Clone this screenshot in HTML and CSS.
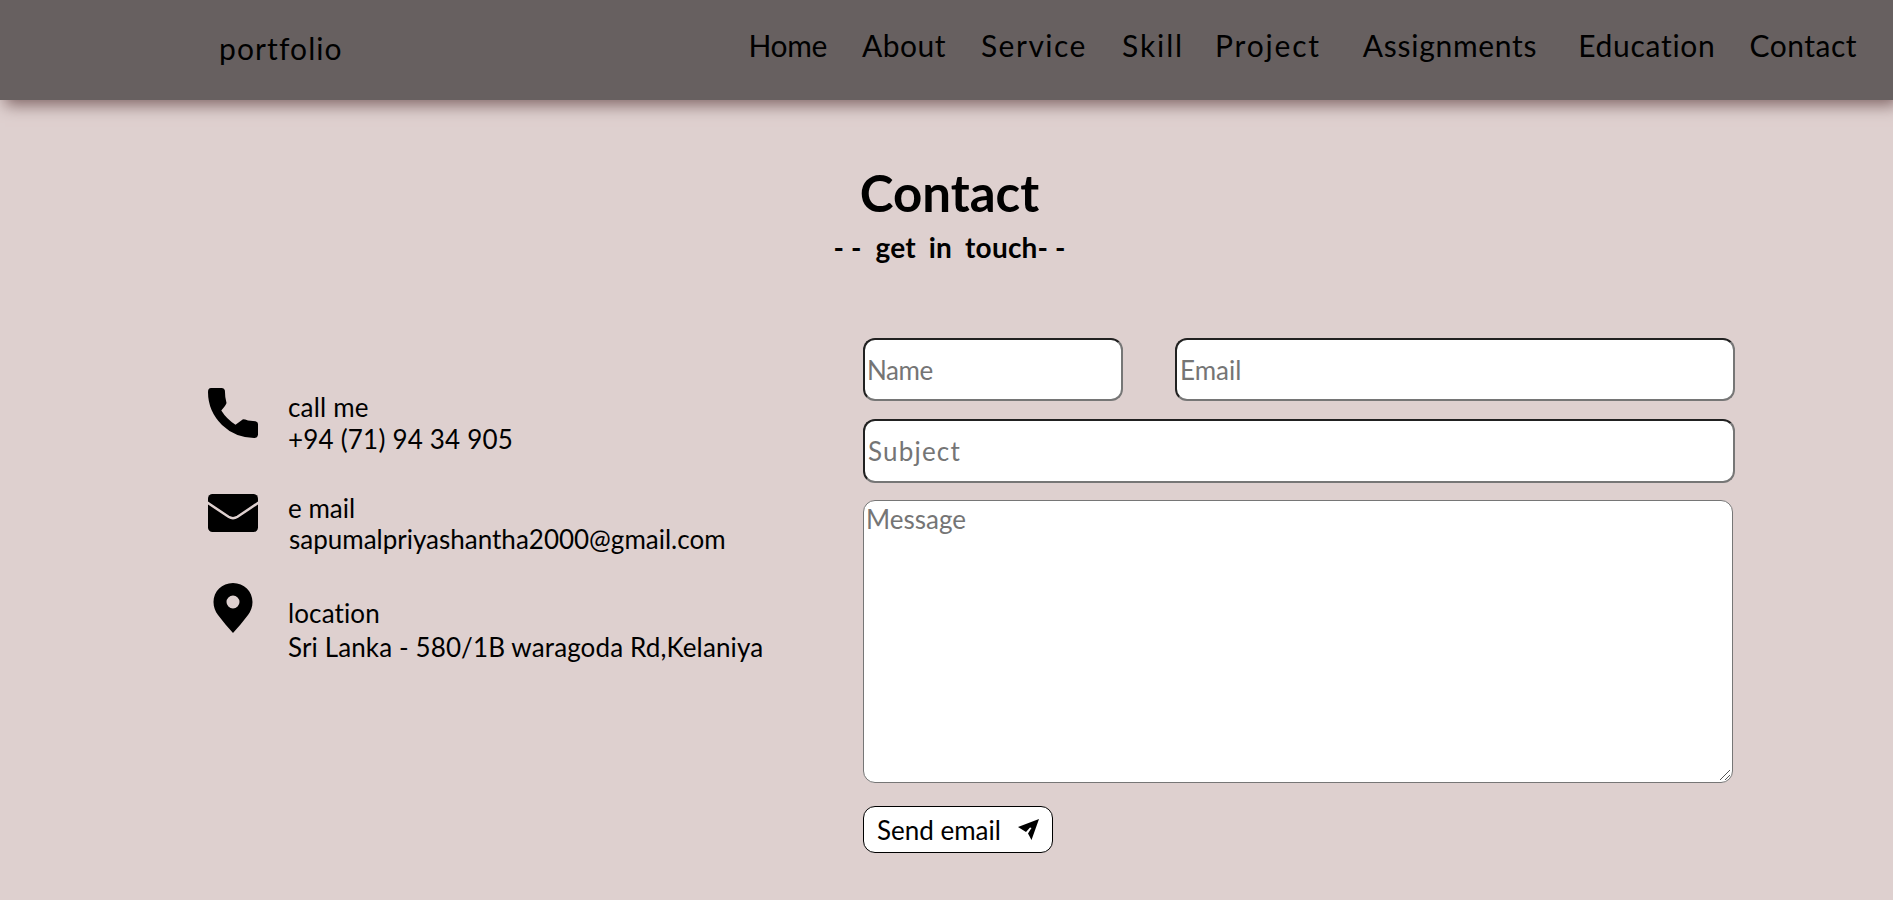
FILE: index.html
```html
<!DOCTYPE html>
<html lang="en">
<head>
<meta charset="utf-8">
<title>portfolio</title>
<link rel="stylesheet" href="styles.css">
</head>
<body>
<header class="navbar">
  <a class="logo">portfolio</a>
  <nav class="menu">
    <a class="home">Home</a><a class="about">About</a><a class="service">Service</a><a class="skill">Skill</a><a class="project">Project</a><a class="assignments">Assignments</a><a class="education">Education</a><a class="contact">Contact</a>
  </nav>
</header>
<main>
  <h1 class="title">Contact</h1>
  <h2 class="subtitle"><span class="dash">--</span> <span class="words">get in touch</span><span class="dash">--</span></h2>
  <div class="columns">
    <section class="info">
      <div class="row phone">
        <svg class="icon" viewBox="0 0 50 50"><path d="M3 0H14Q16.500 0 16.900 2.500L17.300 9 18.500 15Q18 17 13.300 22.500 18.500 31 27.500 36.700L35 31.300Q37 31.300 40 32.500L47.500 33.300Q50 33.800 50 36V46.500Q49.700 50 46 50 27 49.500 14 37 0 23 0 4 0 0 3 0Z"/></svg>
        <div class="lines"><div>call me</div><div>+94 (71) 94 34 905</div></div>
      </div>
      <div class="row mail">
        <svg class="icon" viewBox="0 0 50 50"><rect y="6" width="50" height="38" rx="4.500"/><path class="fold" d="M-1 14.300 20.500 28.800Q25 31.500 29.500 28.800L51 14.300"/></svg>
        <div class="lines"><div>e mail</div><div class="address">sapumalpriyashantha2000@gmail.com</div></div>
      </div>
      <div class="row location">
        <svg class="icon" viewBox="0 0 50 50"><path fill-rule="evenodd" d="M25 0C14 0 5.500 8.500 5.500 19c0 5 1.800 9.500 4.500 13 5 6.500 10 12.500 15 18 5-5.500 10-11.500 15-18 2.700-3.500 4.500-8 4.500-13C44.500 8.500 36 0 25 0ZM25 12.500a6.500 6.500 0 1 1 0 13 6.500 6.500 0 0 1 0-13Z"/></svg>
        <div class="lines"><div>location</div><div>Sri Lanka - 580/1B waragoda Rd,Kelaniya</div></div>
      </div>
    </section>
    <form class="form">
      <div class="pair">
        <input class="name" type="text" placeholder="Name">
        <input class="email" type="text" placeholder="Email">
      </div>
      <input class="subject" type="text" placeholder="Subject">
      <div class="message-box">
        <textarea class="message" placeholder="Message"></textarea>
        <svg class="grip" viewBox="0 0 10 10"><path d="M0 10 10 0M5 10 10 5"/></svg>
      </div>
      <button class="send" type="button">Send email
        <svg class="plane" viewBox="0 0 21 21"><path d="M0 8 21 0 13.500 21 10 14.500 13.500 9 12 8.500 8 13Z"/></svg>
      </button>
    </form>
  </div>
</main>
</body>
</html>
```
FILE: styles.css
```css
* { box-sizing: border-box; }
body {
  margin: 0;
  height: 900px;
  overflow: hidden;
  background: #ded0cf;
  color: #000;
  font-family: "Comic Sans MS", Lato, sans-serif;
  font-variant-ligatures: none;
}
.navbar {
  display: flex;
  justify-content: space-between;
  height: 100px;
  padding: 0 36px 0 218px;
  background: #676060;
  box-shadow: 5px 5px 15px #826767;
  font-size: 30px;
}
.logo { padding-left: 1px; line-height: 96px; letter-spacing: 1.100px; }
.menu { display: flex; line-height: 91px; }
.home { letter-spacing: -.4px; }
.about { margin-left: 35px; letter-spacing: .500px; }
.service { margin-left: 35px; letter-spacing: 1.500px; }
.skill { margin-left: 35px; letter-spacing: 1.900px; }
.project { margin-left: 31px; letter-spacing: 1.800px; }
.assignments { margin-left: 42px; letter-spacing: .7px; }
.education { margin-left: 41px; letter-spacing: .7px; }
.contact { margin-left: 34px; letter-spacing: .5px; }
.title {
  margin: 63px 0 0;
  padding-left: 6px;
  line-height: 60px;
  font-size: 51px;
  text-align: center;
}
.subtitle {
  margin: 8px 0 0;
  padding-left: 13px;
  line-height: 32px;
  font-size: 28px;
  letter-spacing: .2px;
  text-align: center;
}
.words { word-spacing: 6px; }
.dash { letter-spacing: 7px; }
.columns { display: flex; margin-top: 75px; }
.info {
  width: 863px;
  padding: 50px 0 0 208px;
  font-size: 26px;
  line-height: 32px;
  letter-spacing: .12px;
}
.row { display: flex; gap: 30px; height: 100px; white-space: nowrap; }
.lines { padding-top: 3px; }
.phone .lines { letter-spacing: .2px; }
.mail { height: 95px; }
.mail .lines { padding-top: 4px; letter-spacing: 0; }
.address { padding-left: 1px; line-height: 31px; }
.location .lines { padding-top: 13px; line-height: 34px; }
.icon { flex: none; width: 50px; height: 50px; }
.fold { fill: none; stroke: #ded0cf; stroke-width: 2.500; }
.form { width: 872px; }
.pair { display: flex; gap: 52px; margin-bottom: 18px; }
.form input, .message, .send {
  display: block;
  border-radius: 12px;
  background: #fff;
  font: 26px "Comic Sans MS", Lato, sans-serif;
}
.form input {
  height: 63px;
  padding: 1px 2px;
  border: 2px inset #767676;
}
.form .name { width: 260px; letter-spacing: -.4px; }
.form .email { width: 560px; padding-left: 3px; }
.form .subject { width: 872px; height: 64px; padding-left: 3px; letter-spacing: 1.200px; }
.form ::placeholder { color: #757575; }
.message-box { position: relative; width: 870px; margin-top: 17px; }
.message {
  width: 870px;
  height: 283px;
  padding: 2px;
  border: 1px solid #767676;
  resize: none;
}
.grip {
  position: absolute;
  right: 3px;
  bottom: 3px;
  width: 10px;
  height: 10px;
  fill: none;
  stroke: #555;
}
.form .send {
  display: flex;
  align-items: center;
  justify-content: space-between;
  width: 190px;
  height: 47px;
  margin-top: 23px;
  padding: 0 13px;
  border: 1px solid #000;
}
.plane { width: 21px; height: 21px; }
```
